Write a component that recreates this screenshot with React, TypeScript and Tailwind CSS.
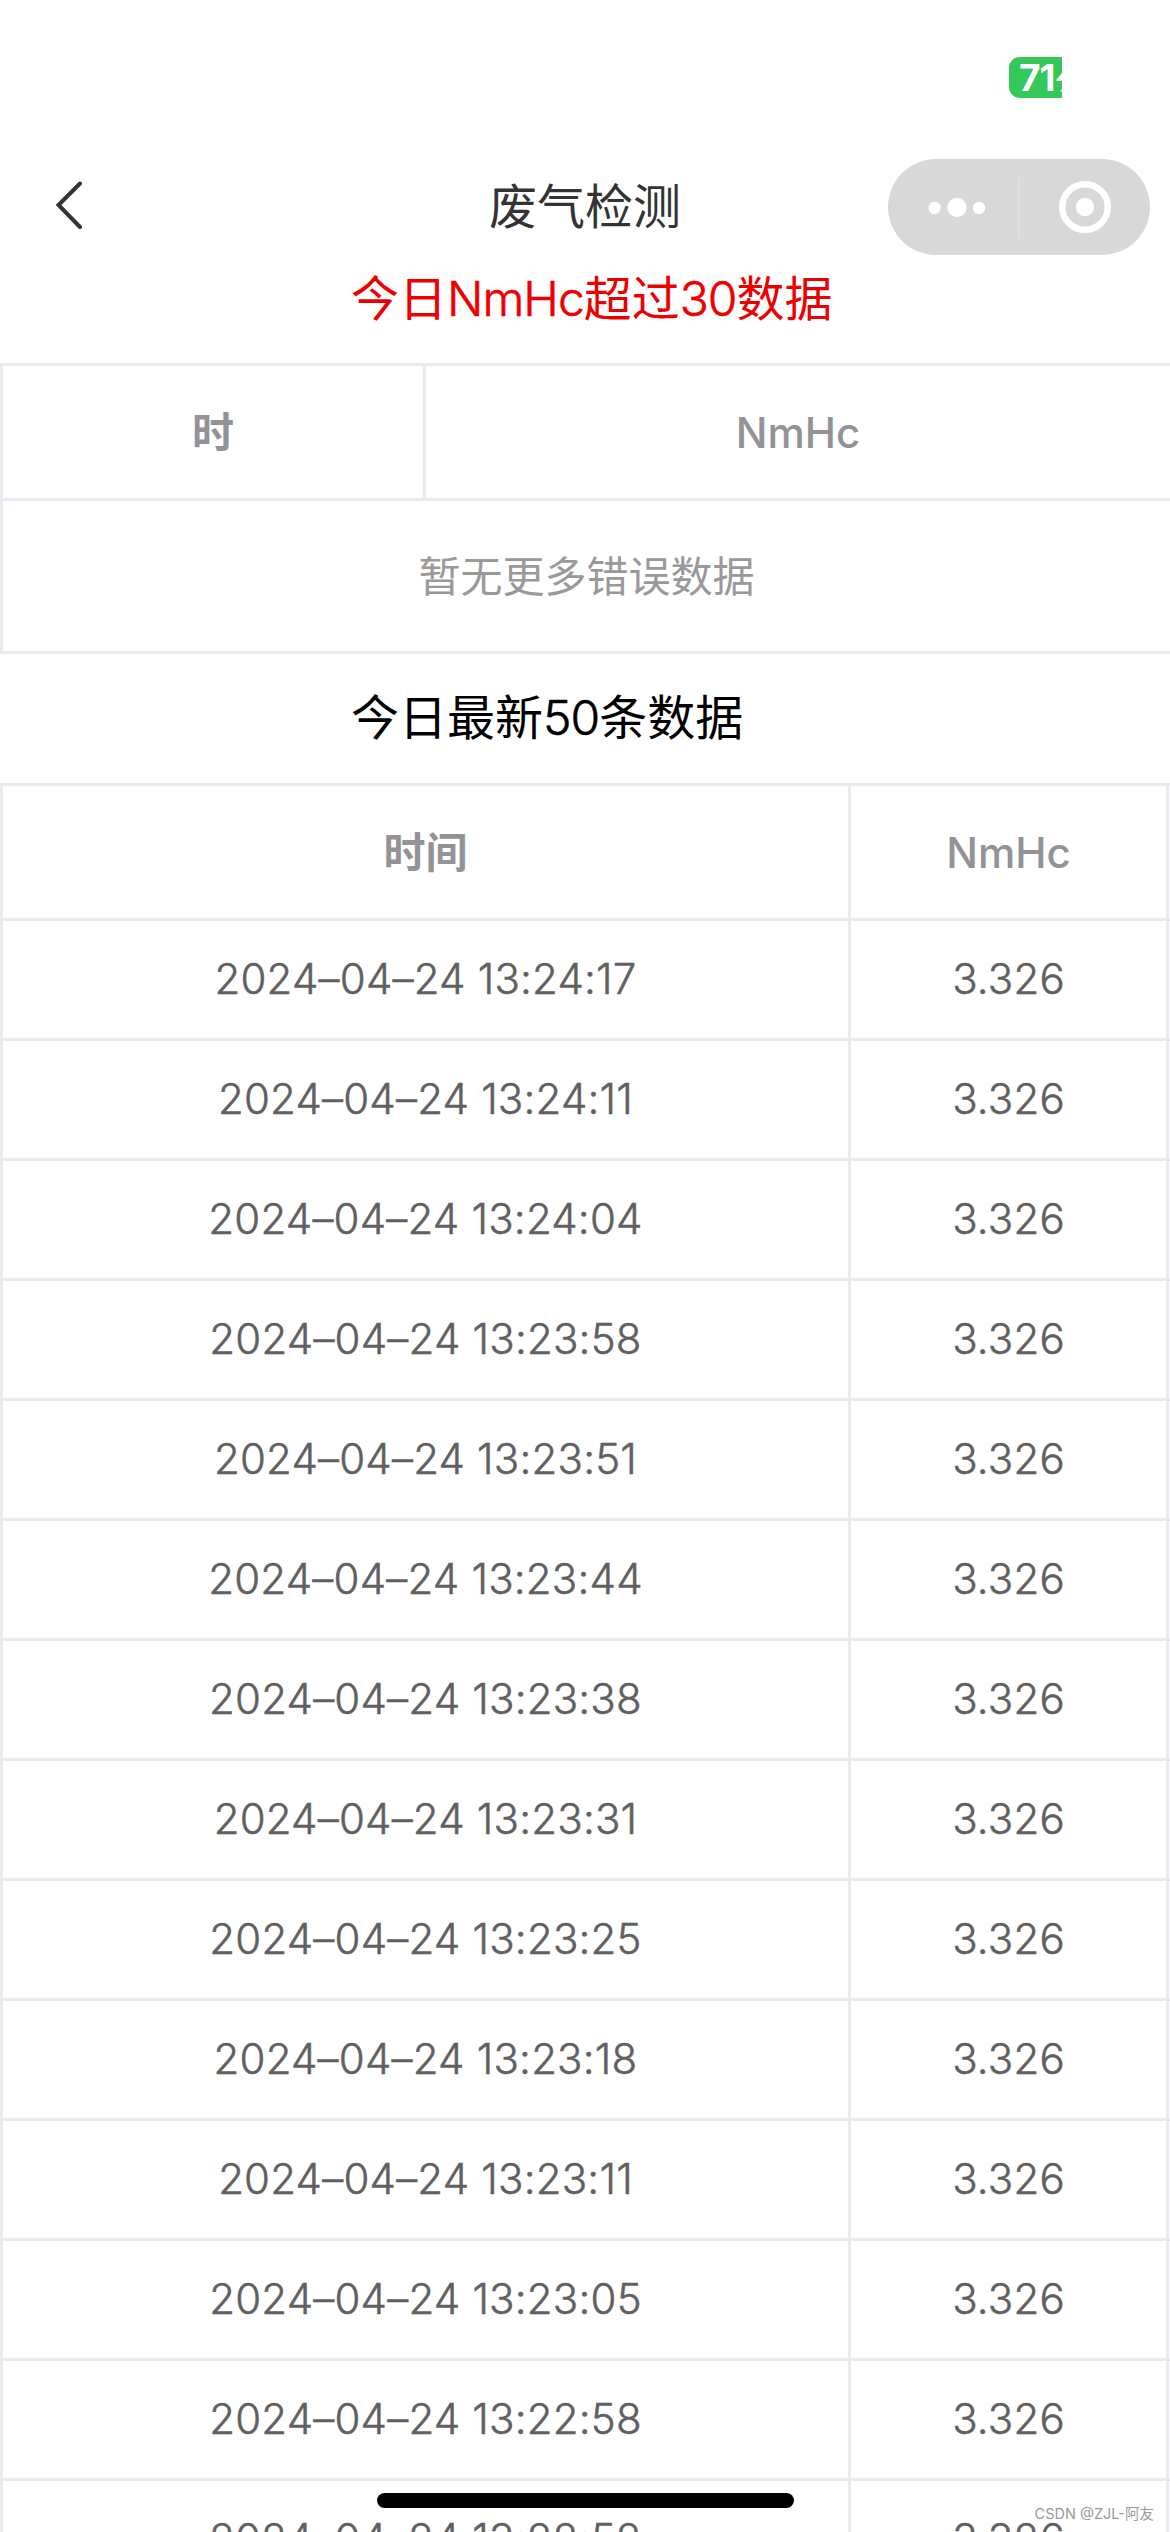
import { ReactNode } from 'react'

interface Reading {
  time: string
  value: string
}

const readings: Reading[] = [
  { time: '2024–04–24 13:24:17', value: '3.326' },
  { time: '2024–04–24 13:24:11', value: '3.326' },
  { time: '2024–04–24 13:24:04', value: '3.326' },
  { time: '2024–04–24 13:23:58', value: '3.326' },
  { time: '2024–04–24 13:23:51', value: '3.326' },
  { time: '2024–04–24 13:23:44', value: '3.326' },
  { time: '2024–04–24 13:23:38', value: '3.326' },
  { time: '2024–04–24 13:23:31', value: '3.326' },
  { time: '2024–04–24 13:23:25', value: '3.326' },
  { time: '2024–04–24 13:23:18', value: '3.326' },
  { time: '2024–04–24 13:23:11', value: '3.326' },
  { time: '2024–04–24 13:23:05', value: '3.326' },
  { time: '2024–04–24 13:22:58', value: '3.326' },
  { time: '2024–04–24 13:22:52', value: '3.326' },
]

function StatusBar() {
  return (
    <div className="flex h-[159px] justify-end pt-[57px] pr-[108px]">
      <div className="relative flex h-[41px] w-[53px] items-center overflow-hidden rounded-l-[11px] bg-[#34c759] pl-[10px]">
        <span className="text-[37px] leading-none font-bold tracking-[-1px] text-white">71</span>
        <svg className="absolute top-0 right-0" width="6" height="41" viewBox="0 0 6 41" fill="#fff">
          <path d="M6 16 L0.5 22.5 Q0 24 1.5 24 H6 Z M6 32 L4 34.5 H6 Z" />
        </svg>
      </div>
    </div>
  )
}

function NavBar() {
  return (
    <header className="grid h-24 grid-cols-[1fr_auto_1fr] items-center">
      <div className="min-w-0 pl-[54px]">
        <svg width="30" height="52" viewBox="0 0 30 52" fill="none" stroke="#333" strokeWidth="4" strokeLinecap="round">
          <path d="M26 2.5 L4.5 24 L26 46" />
        </svg>
      </div>
      <h1 className="text-5xl leading-[70px] text-[#333]">废气检测</h1>
      <div className="flex min-w-0 justify-end pr-[20px]">
        <svg width="262" height="96" viewBox="0 0 262 96">
          <rect width="262" height="96" rx="48" fill="#d8d8d8" />
          <g fill="#fff">
            <circle cx="46.7" cy="49" r="6.2" />
            <circle cx="69" cy="48.5" r="9.7" />
            <circle cx="91" cy="49" r="6.2" />
            <circle cx="197" cy="48" r="9.2" />
          </g>
          <circle cx="197" cy="48" r="22.8" fill="none" stroke="#fff" strokeWidth="6.4" />
          <rect x="130.5" y="18" width="1.5" height="62" fill="#e0e0e0" />
        </svg>
      </div>
    </header>
  )
}

function Th({ className, children }: { className: string; children: ReactNode }) {
  return (
    <div className={`flex items-center justify-center border-[#ebeaf1] text-[42px] text-[#929297] ${className}`}>
      {children}
    </div>
  )
}

// Latin letters and digits inside a Chinese heading
function Latin({ children }: { children: ReactNode }) {
  return <span className="font-light tracking-[-1px] [-webkit-text-stroke:0.6px]">{children}</span>
}

export default function App() {
  return (
    <div className="relative h-[2532px] w-[1170px] overflow-hidden bg-white font-[Inter,'Noto_Sans_CJK_SC',sans-serif]">
      <StatusBar />
      <NavBar />

      <div className="h-[108px] pt-[9px] pl-[351px]">
        <h2 className="text-5xl leading-[70px] text-[#ee0000]">
          今日<Latin>NmHc</Latin>超过<Latin>30</Latin>数据
        </h2>
      </div>

      {/* Over-limit table, runs off the right edge */}
      <section className="border-y-3 border-l-3 border-[#ebeaf1]">
        <div className="flex h-[135px] border-b-3 border-[#ebeaf1]">
          <Th className="w-[423px] border-r-3 font-semibold">时</Th>
          <Th className="w-[744px] font-medium">NmHc</Th>
        </div>
        <div className="flex h-[150px] items-center justify-center text-[42px] text-[#999]">
          暂无更多错误数据
        </div>
      </section>

      <div className="h-[129px] pt-[29px] pl-[351px]">
        <h2 className="text-5xl leading-[70px] text-black">
          今日最新<Latin>50</Latin>条数据
        </h2>
      </div>

      {/* Latest readings */}
      <section className="border-t-3 border-l-3 border-[#ebeaf1]">
        <div className="flex h-[135px] border-b-3 border-[#ebeaf1]">
          <Th className="w-[848px] border-r-3 font-semibold">时间</Th>
          <Th className="w-[318px] border-r-3 font-medium">NmHc</Th>
        </div>
        {readings.map((item) => (
          <div
            key={item.time}
            className="flex h-[120px] border-b-3 border-[#ebeaf1] text-[42px] font-light tracking-[0.2px] text-[#606060] [-webkit-text-stroke:0.5px]"
          >
            <div className="flex w-[848px] items-center justify-center border-r-3 border-[#ebeaf1] pb-[3px]">{item.time}</div>
            <div className="flex w-[318px] items-center justify-center border-r-3 border-[#ebeaf1] pb-[3px]">{item.value}</div>
          </div>
        ))}
      </section>

      <div className="absolute top-[2493px] left-[377px] h-[15px] w-[417px] rounded-full bg-black" />
      <div className="absolute right-[16px] bottom-[6px] text-[14.5px] leading-[24px] text-[#999]">CSDN @ZJL-阿友</div>
    </div>
  )
}
